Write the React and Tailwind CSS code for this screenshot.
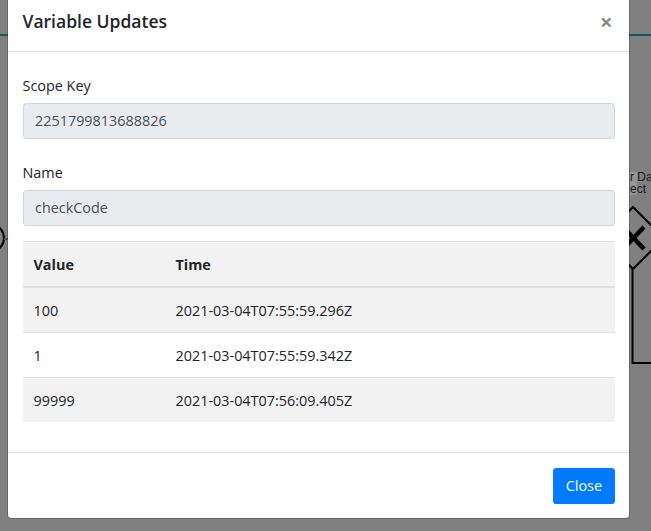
const rows = [
  { value: "100", time: "2021-03-04T07:55:59.296Z" },
  { value: "1", time: "2021-03-04T07:55:59.342Z" },
  { value: "99999", time: "2021-03-04T07:56:09.405Z" },
];

const Field = ({ label, value, className = "" }) => (
  <div className={className}>
    <label className="block text-[14.4px] leading-[22px] text-[#212529]">
      {label}
    </label>
    <div className="mt-[6px] flex h-[36px] items-center rounded-[3.6px] border border-[#ced4da] bg-[#e9ecef] px-[11.5px] text-[14.4px] text-[#495057]">
      {value}
    </div>
  </div>
);

// bits of the bpmn diagram showing through the backdrop
const DiagramBehind = () => (
  <>
    <svg
      className="pointer-events-none absolute left-0 top-0"
      width="651"
      height="531"
      viewBox="0 0 651 531"
    >
      <rect x="0" y="34" width="651" height="2" fill="#175563" />
      <circle cx="-10" cy="238" r="14" fill="none" stroke="#000" strokeWidth="2" />
      <line x1="4" y1="239" x2="8" y2="239" stroke="#2f6b1e" strokeWidth="2" />
      <rect x="630" y="172" width="7" height="23" fill="#959595" />
      <polygon
        points="633,207 664,238 633,269 602,238"
        fill="none"
        stroke="#000"
        strokeWidth="2"
      />
      <line x1="623" y1="227" x2="644" y2="249" stroke="#000" strokeWidth="4.5" />
      <line x1="644" y1="227" x2="623" y2="249" stroke="#000" strokeWidth="4.5" />
      <polyline
        points="632.5,269 632.5,363 651,363"
        fill="none"
        stroke="#000"
        strokeWidth="2"
      />
    </svg>
    <div className="absolute left-[630px] top-[171px] whitespace-nowrap font-['Liberation_Sans',sans-serif] text-[12px] leading-[12px] text-[#151a24]">
      <div>r Da</div>
      <div>ect</div>
    </div>
  </>
);

export default function App() {
  return (
    <div className="relative h-[531px] w-[651px] overflow-hidden bg-[#808080] font-['Open_Sans',sans-serif]">
      <DiagramBehind />

      <div className="relative ml-[7px] w-[623px] rounded-b-[4.5px] border-x border-b border-black/20 bg-white bg-clip-padding">
        {/* Header */}
        <div className="flex h-[52px] items-start justify-between border-b border-[#dee2e6] px-[14.5px] pt-[8px]">
          <h5 className="text-[17.5px] font-semibold leading-[27px] text-[#212529]">
            Variable Updates
          </h5>
          <button className="mr-[2px] text-[22px] font-bold leading-[27px] text-[#8a8a8a]">
            ×
          </button>
        </div>

        {/* Body */}
        <div className="px-[14.5px] pb-[30px] pt-[23px]">
          <Field label="Scope Key" value="2251799813688826" />
          <Field label="Name" value="checkCode" className="mt-[23px]" />

          <div className="mt-[15px] text-[14.4px] leading-[21px] text-[#212529]">
            <div className="flex h-[47px] items-center border-b-2 border-t border-[#dee2e6] bg-[#f2f2f2] font-bold">
              <div className="w-[142px] pl-[11px]">Value</div>
              <div className="pl-[11px]">Time</div>
            </div>
            {rows.map((row, i) => (
              <div
                key={row.time}
                className={`flex items-center ${
                  i === 0 ? "h-[44px]" : "h-[45px] border-t border-[#dee2e6]"
                } ${i % 2 === 0 ? "bg-[#f2f2f2]" : "bg-white"}`}
              >
                <div className="w-[142px] pl-[11px]">{row.value}</div>
                <div className="pl-[11px]">{row.time}</div>
              </div>
            ))}
          </div>
        </div>

        {/* Footer */}
        <div className="flex justify-end border-t border-[#dee2e6] px-[14.5px] pb-[14px] pt-[15px]">
          <button className="h-[36px] rounded-[3.6px] bg-[#007bff] px-[12.5px] text-[14.4px] text-white">
            Close
          </button>
        </div>
      </div>
    </div>
  );
}
